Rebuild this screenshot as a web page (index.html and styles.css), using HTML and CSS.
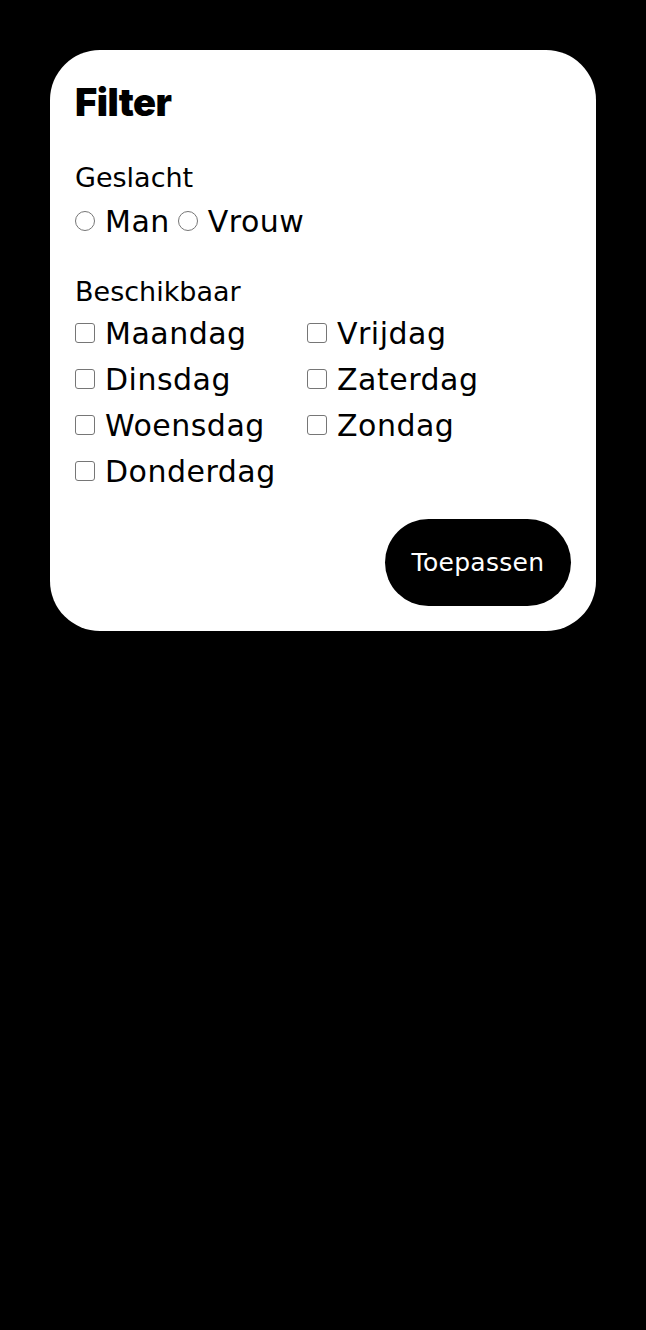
FILE: index.html
```html
<!DOCTYPE html>
<html lang="nl">
<head>
<meta charset="utf-8">
<title>Filter</title>
<link rel="stylesheet" href="styles.css">
</head>
<body>
<form class="card">
  <h1 class="title">Filter</h1>
  <div class="group">
    <div class="group-label">Geslacht</div>
    <div class="radios">
      <label class="opt"><span class="radio"></span>Man</label>
      <label class="opt"><span class="radio"></span>Vrouw</label>
    </div>
  </div>
  <div class="group group-days">
    <div class="group-label">Beschikbaar</div>
    <div class="days">
      <label class="opt"><span class="check"></span>Maandag</label>
      <label class="opt"><span class="check"></span>Vrijdag</label>
      <label class="opt"><span class="check"></span>Dinsdag</label>
      <label class="opt"><span class="check"></span>Zaterdag</label>
      <label class="opt"><span class="check"></span>Woensdag</label>
      <label class="opt"><span class="check"></span>Zondag</label>
      <label class="opt"><span class="check"></span>Donderdag</label>
    </div>
  </div>
  <div class="actions">
    <button type="button" class="btn">Toepassen</button>
  </div>
</form>
</body>
</html>
```
FILE: styles.css
```css
html, body {
  margin: 0;
  background: #000;
}
body {
  padding: 50px;
  font-family: "DejaVu Sans", "Liberation Sans", sans-serif;
  color: #000;
}
.card {
  width: 546px;
  box-sizing: border-box;
  background: #fff;
  border-radius: 50px;
  padding: 25px;
  display: flex;
  flex-direction: column;
}
.title {
  margin: 0;
  font-family: Inter, "DejaVu Sans", sans-serif;
  font-size: 38px;
  font-weight: 900;
  letter-spacing: -0.5px;
  line-height: 54px;
}
.group {
  margin-top: 31px;
}
.group-label {
  font-size: 27px;
  line-height: 36px;
  margin-bottom: 2px;
}
.group-days {
  margin-top: 30px;
}
.group-days .group-label {
  margin-bottom: 0;
}
.radios {
  display: flex;
  gap: 8px;
  height: 46px;
  align-items: center;
}
.days {
  display: grid;
  grid-template-columns: 232px 1fr;
  grid-auto-rows: 46px;
}
.opt {
  display: flex;
  align-items: center;
  font-size: 30px;
  letter-spacing: 0.5px;
  gap: 10px;
  white-space: nowrap;
}
.radio, .check {
  width: 18px;
  height: 18px;
  border: 1px solid #767676;
  box-sizing: content-box;
  flex: none;
  background: #fff;
}
.radio {
  border-radius: 50%;
}
.check {
  border-radius: 3px;
}
.actions {
  display: flex;
  justify-content: flex-end;
  margin-top: 25px;
}
.btn {
  height: 87px;
  width: 186px;
  border: 0;
  border-radius: 44px;
  background: #000;
  color: #fff;
  font-family: inherit;
  font-size: 25px;
  letter-spacing: 0.3px;
  cursor: pointer;
}
```
